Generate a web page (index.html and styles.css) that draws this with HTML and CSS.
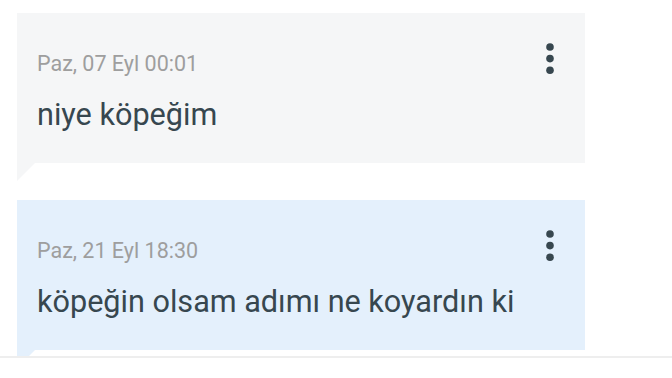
FILE: index.html
```html
<!DOCTYPE html>
<html lang="tr">
<head>
  <meta charset="UTF-8">
  <title>Notlar</title>
  <link rel="stylesheet" href="styles.css">
</head>
<body>
  <div class="thread">
    <div class="message">
      <div class="bubble">
        <div class="content">
          <p class="date">Paz, 07 Eyl 00:01</p>
          <p class="text">niye köpeğim</p>
        </div>
        <button class="menu" aria-label="Menü">
          <svg width="8" height="32" viewBox="0 0 8 32">
            <circle cx="4" cy="4" r="3.8" />
            <circle cx="4" cy="15.6" r="3.8" />
            <circle cx="4" cy="27.2" r="3.8" />
          </svg>
        </button>
      </div>
      <div class="tail"></div>
    </div>

    <div class="message mine">
      <div class="bubble">
        <div class="content">
          <p class="date">Paz, 21 Eyl 18:30</p>
          <p class="text">köpeğin olsam adımı ne koyardın ki</p>
        </div>
        <button class="menu" aria-label="Menü">
          <svg width="8" height="32" viewBox="0 0 8 32">
            <circle cx="4" cy="4" r="3.8" />
            <circle cx="4" cy="15.6" r="3.8" />
            <circle cx="4" cy="27.2" r="3.8" />
          </svg>
        </button>
      </div>
      <div class="tail"></div>
    </div>
  </div>

  <div class="footer"></div>
</body>
</html>
```

FILE: styles.css
```css
body {
  margin: 0;
  background: #ffffff;
  font-family: Roboto, "Noto Sans", sans-serif;
  color: #37474f;
}

.thread {
  padding: 13px 87px 0 17px;
}

.message {
  margin-bottom: 19px;
}

.bubble {
  display: flex;
  justify-content: space-between;
  align-items: flex-start;
  height: 150px;
  box-sizing: border-box;
  padding: 30px 31px 30px 20px;
  background-color: #f5f6f7;
}

.content {
  padding-top: 9px;
}

.date {
  margin: 0;
  font-size: 21.5px;
  line-height: 24px;
  color: #9e9e9e;
}

.text {
  margin: 21px 0 0;
  font-size: 30.6px;
  line-height: 36px;
  color: #37474f;
}

.menu {
  padding: 0;
  border: none;
  background: none;
  cursor: pointer;
}

.menu svg {
  display: block;
  fill: #37474f;
}

.tail {
  width: 0;
  height: 0;
  border-top: 18px solid #f5f6f7;
  border-right: 18px solid transparent;
}

.mine .bubble {
  background-color: #e4f0fc;
}

.mine .tail {
  border-top-color: #e4f0fc;
}

.footer {
  position: fixed;
  left: 0;
  right: 0;
  bottom: 0;
  height: 20px;
  background: #ffffff;
  border-top: 2px solid #eeeeee;
}
```
